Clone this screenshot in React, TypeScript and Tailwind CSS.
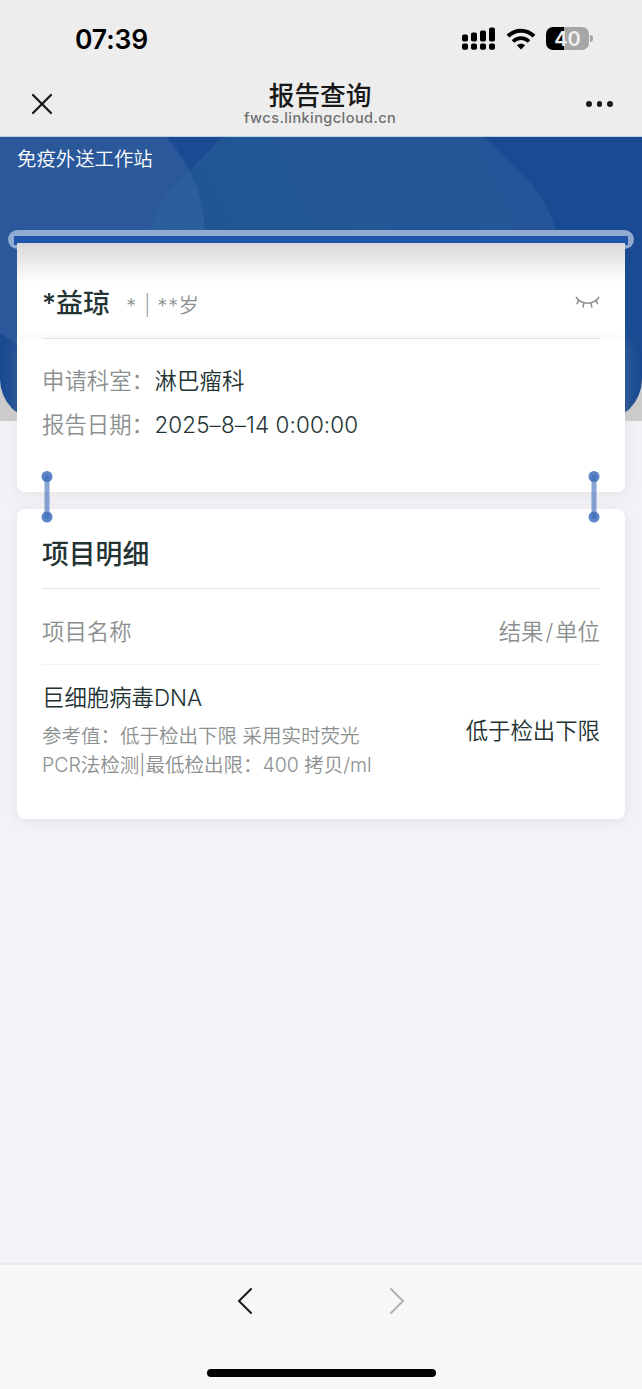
import { Fragment } from 'react';
import { X } from 'lucide-react';

const INFO = [
  { label: '申请科室：', value: '淋巴瘤科' },
  { label: '报告日期：', value: '2025–8–14 0:00:00' },
];

const ITEMS = [
  {
    name: '巨细胞病毒DNA',
    reference: ['参考值：低于检出下限 采用实时荧光', 'PCR法检测|最低检出限：400 拷贝/ml'],
    result: '低于检出下限',
  },
];

function SignalIcon() {
  return (
    <svg width="34" height="24" viewBox="0 0 34 24" aria-hidden="true">
      {[7, 5, 3, 0].map((y, i) => (
        <Fragment key={y}>
          <rect x={i * 9} y={y + 0.5} width="6" height={14 - y} rx="1.8" />
          <rect x={i * 9} y="16.5" width="6" height="6.3" rx="1.8" />
        </Fragment>
      ))}
    </svg>
  );
}

function WifiIcon() {
  return (
    <svg width="30" height="22" viewBox="0 0 30 22" fill="none" stroke="#000" aria-hidden="true">
      <path d="M2 8.2C9.3.9 20.7.9 28 8.2" strokeWidth="4" />
      <path d="M7 13.5c4.6-4.4 11.4-4.4 16 0" strokeWidth="3.8" />
      <path d="M15 21.4l-4.2-4.2c2.3-2.1 6.1-2.1 8.4 0z" fill="#000" stroke="none" />
    </svg>
  );
}

function Battery() {
  return (
    <div className="flex items-center gap-px">
      <div className="flex h-[23px] w-[43px] items-center justify-center rounded-[7px] bg-[linear-gradient(90deg,#000_41%,#a6a6a6_41%)] font-['Inter'] text-[20px] leading-none font-semibold text-[#f0f0f0]">
        40
      </div>
      <div className="h-[7px] w-[3px] rounded-r-full bg-[#a6a6a6]" />
    </div>
  );
}

function Header() {
  return (
    <header className="h-[137px] border-b border-[#bdd0e8] bg-[#ededed]">
      <div className="flex h-[77px] items-center justify-between pr-[49px] pl-[75px]">
        <span className="pt-[2px] font-['Inter'] text-[26.5px] font-semibold tracking-[-0.1px] text-black">07:39</span>
        <div className="flex items-center gap-[10px]">
          <SignalIcon />
          <WifiIcon />
          <Battery />
        </div>
      </div>
      <div className="flex items-start justify-between pr-[29px] pl-[24px]">
        <X className="mt-[9px] size-[36px] text-[#181818]" strokeWidth={1.5} />
        <div className="mr-[6px] flex flex-col items-center">
          <h1 className="mt-[2px] text-[25.7px] leading-[33px] font-medium text-[#181818]">报告查询</h1>
          <p className="-mt-px font-['Inter'] text-[14.5px] leading-[14px] font-medium tracking-[0.44px] text-[#6f6f6f]">
            fwcs.linkingcloud.cn
          </p>
        </div>
        <div className="mt-6 flex gap-[5px]">
          {[0, 1, 2].map((dot) => (
            <i key={dot} className="size-[5.6px] rounded-full bg-[#181818]" />
          ))}
        </div>
      </div>
    </header>
  );
}

function Hero() {
  return (
    <section className="h-[284px] bg-[#cccccd]">
      <div className="relative h-full overflow-hidden rounded-b-[42px] bg-[#1a4b92]">
        <svg className="absolute inset-0" width="642" height="284" aria-hidden="true">
          <defs>
            <linearGradient id="band" x1="150" y1="100" x2="500" y2="-60" gradientUnits="userSpaceOnUse">
              <stop offset="0" stopColor="#30709a" stopOpacity="0.25" />
              <stop offset="1" stopColor="#2c5a9c" stopOpacity="0.65" />
            </linearGradient>
          </defs>
          <path d="M0 0H166Q205 42 205 102V284H130L0 196Z" fill="#2a589b" />
          <path d="M222 0L170 54Q149 78 149 110H558Q556 76 530 46L484 0Z" fill="url(#band)" />
        </svg>
        <p className="relative pt-[8px] pl-[17px] text-[19.4px] leading-[29px] font-[350] text-white">免疫外送工作站</p>
      </div>
    </section>
  );
}

function ClosedEye() {
  return (
    <svg width="26" height="16" viewBox="0 0 26 16" fill="none" stroke="#8b8f8f" strokeWidth="1.5" aria-hidden="true">
      <path d="M2 2C7 10.2 20 10.2 25 2" />
      <path d="M4.8 5.1L2.8 9.3M10 7.7L8.9 12.6M17 7.7L17.9 12.6M22.1 5.1L23.9 9.3" />
    </svg>
  );
}

// Pin that visually clips the two cards together
function Connector() {
  return (
    <svg width="12" height="52" viewBox="0 0 12 52" aria-hidden="true">
      <circle cx="6" cy="5.5" r="5.5" fill="#5b85c5" />
      <circle cx="6" cy="46" r="5.5" fill="#5b85c5" />
      <rect x="3.5" y="3.5" width="5" height="44.5" rx="2.5" fill="#3f70ba" fillOpacity="0.62" />
    </svg>
  );
}

function PatientCard() {
  return (
    <section className="relative h-[249px] rounded-b-lg bg-[linear-gradient(#d9d9d9,#fff_40px)]">
      <div className="mx-[25px] flex h-[96px] items-center justify-between border-b border-[#e4e5e6] pt-[25px]">
        <div className="flex items-center pt-[2px]">
          <h2 className="text-[27px] leading-[30px] font-medium text-[#233333]">*益琼</h2>
          <span className="ml-[16px] flex items-center pt-[3px] text-[20.5px] leading-[30px] font-[350] text-[#8b8f8f]">
            *<span className="-ml-[1px] w-[24px] text-center text-[24px]">｜</span>
          </span>
          <span className="-ml-[2px] pt-[3px] text-[20.5px] leading-[30px] font-[350] tracking-[0.3px] text-[#8b8f8f]">**岁</span>
        </div>
        <ClosedEye />
      </div>
      <dl className="h-[153px] rounded-lg bg-white px-[25px] pt-[20px] text-[22.4px] leading-[43.5px] font-[350] shadow-[0_2px_16px_rgba(190,190,195,0.28)]">
        {INFO.map(({ label, value }) => (
          <div key={label} className="flex">
            <dt className="w-[112.5px] text-[#8b8f8f]">{label}</dt>
            <dd className="tracking-[0.12px] text-[#233333]">{value}</dd>
          </div>
        ))}
      </dl>
    </section>
  );
}

function DetailCard() {
  return (
    <section className="relative mt-[17px] h-[310px] rounded-lg bg-white px-[25px] shadow-[0_2px_14px_rgba(0,0,0,0.07)]">
      <div className="absolute -top-[38px] right-[25px] left-[24px] flex justify-between">
        <Connector />
        <Connector />
      </div>
      <h2 className="h-[80px] border-b border-[#e4e5e6] pt-[26px] text-[26.8px] leading-[38px] font-medium text-[#233333]">
        项目明细
      </h2>
      <div className="flex h-[76px] items-center justify-between border-b border-[#f3f3f4] pt-[11px] text-[22.4px] font-[350] text-[#8b8f8f]">
        <span>项目名称</span>
        <span>
          结果<span className="px-[2px]">/</span>单位
        </span>
      </div>
      {ITEMS.map((item) => (
        <div key={item.name} className="flex items-center justify-between pt-[16px] font-[350]">
          <div>
            <h3 className="text-[22.4px] leading-[34px] text-[#233333]">{item.name}</h3>
            <div className="pt-[7px] text-[19.5px] leading-[29px] text-[#8b8f8f]">
              {item.reference.map((line) => (
                <p key={line}>{line}</p>
              ))}
            </div>
          </div>
          <span className="text-[22.4px] text-[#233333]">{item.result}</span>
        </div>
      ))}
    </section>
  );
}

function BottomBar() {
  return (
    <footer className="flex h-[126px] flex-col items-center justify-between border-t-2 border-[#ebebed] bg-[#f7f7f7] pt-[22px] pb-[12px]">
      <div className="flex gap-[136px]">
        <svg width="16" height="28" viewBox="0 0 16 28" fill="none" stroke="#181818" strokeWidth="2" aria-hidden="true">
          <path d="M14 2L2 14L14 26" strokeLinecap="round" />
        </svg>
        <svg width="16" height="28" viewBox="0 0 16 28" fill="none" stroke="#b2b2b2" strokeWidth="2" aria-hidden="true">
          <path d="M2 2L14 14L2 26" strokeLinecap="round" />
        </svg>
      </div>
      <div className="h-[8px] w-[229px] rounded-full bg-black" />
    </footer>
  );
}

export default function App() {
  return (
    <div className="flex h-[1389px] w-[642px] flex-col overflow-hidden bg-[#f2f2f7] font-['Inter','Noto_Sans_CJK_SC',sans-serif]">
      <Header />
      <main className="flex-1">
        <Hero />
        <div className="relative -mt-[191px] h-[19px] px-2">
          <div className="h-full rounded-full bg-[#90aad0] p-[6px]">
            <div className="h-[9px] bg-[#1e56aa]" />
          </div>
        </div>
        <div className="-mt-[6px] px-[17px]">
          <PatientCard />
          <DetailCard />
        </div>
      </main>
      <BottomBar />
    </div>
  );
}
